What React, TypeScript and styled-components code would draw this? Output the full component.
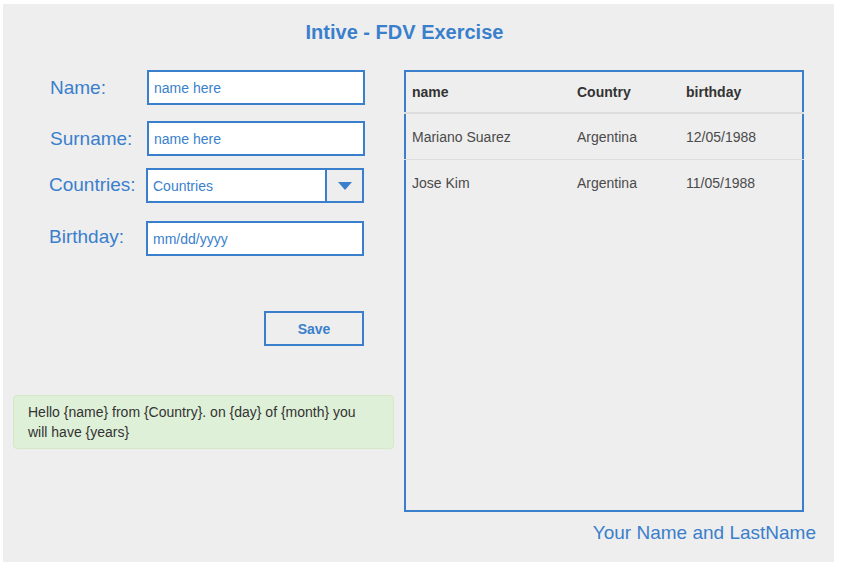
import React from "react";
import styled, { createGlobalStyle } from "styled-components";

const BLUE = "#3a7fcc";

const Global = createGlobalStyle`
  html, body { margin: 0; padding: 0; background: #ffffff; }
  body { font-family: "Liberation Sans", Arial, sans-serif; }
  * { box-sizing: border-box; }
`;

const Panel = styled.div`
  margin: 4px 0 0 3px;
  width: 831px;
  height: 558px;
  background: #eeeeee;
  padding: 16px 0 0 10px;
  display: flex;
  flex-direction: column;
`;

const Title = styled.h1`
  margin: 0 28px 0 -10px;
  font-size: 20px;
  line-height: 24px;
  font-weight: bold;
  color: ${BLUE};
  text-align: center;
`;

const Main = styled.div`
  margin-top: 26px;
  display: grid;
  grid-template-columns: 381px 400px;
  column-gap: 10px;
  height: 442px;
`;

const FormCol = styled.div`
  display: flex;
  flex-direction: column;
`;

const Row = styled.div<{ $top: number; $left: number }>`
  display: flex;
  align-items: flex-start;
  margin-top: ${(p) => p.$top}px;
  padding-left: ${(p) => p.$left}px;
`;

const Label = styled.label<{ $pt: number; $w: number }>`
  width: ${(p) => p.$w}px;
  padding-top: ${(p) => p.$pt}px;
  font-size: 19px;
  color: ${BLUE};
  line-height: 22px;
`;

const Input = styled.input`
  width: 218px;
  height: 35px;
  border: 2px solid ${BLUE};
  background: #ffffff;
  padding: 0 5px;
  font-family: "Liberation Sans", Arial, sans-serif;
  font-size: 14px;
  color: ${BLUE};
  outline: none;
  &::placeholder { color: ${BLUE}; opacity: 1; }
`;

const Select = styled.div`
  width: 218px;
  height: 35px;
  border: 2px solid ${BLUE};
  display: flex;
  background: #ffffff;
`;

const SelectText = styled.div`
  flex: 1;
  display: flex;
  align-items: center;
  padding-left: 5px;
  font-size: 14px;
  color: ${BLUE};
`;

const SelectArrow = styled.div`
  width: 37px;
  border-left: 2px solid ${BLUE};
  background: #eeeeee;
  display: flex;
  align-items: center;
  justify-content: center;
`;

const ButtonRow = styled.div`
  margin-top: 55px;
  padding-left: 251px;
`;

const SaveButton = styled.button`
  width: 100px;
  height: 35px;
  border: 2px solid ${BLUE};
  background: #eeeeee;
  color: ${BLUE};
  font-family: "Liberation Sans", Arial, sans-serif;
  font-weight: bold;
  font-size: 14px;
  cursor: pointer;
`;

const Message = styled.div`
  margin-top: 49px;
  background: #dff0d8;
  border: 1px solid #d6e9c6;
  border-radius: 4px;
  padding: 6px 22px 6px 14px;
  font-size: 14px;
  line-height: 20px;
  color: #333333;
`;

const Table = styled.div`
  border: 2px solid ${BLUE};
  display: flex;
  flex-direction: column;
`;

const TRow = styled.div<{ $head?: boolean }>`
  margin: 0 -2px;
  display: grid;
  grid-template-columns: 165px 109px 1fr;
  height: ${(p) => (p.$head ? 42 : 46)}px;
  border-bottom: ${(p) => (p.$head ? "2px solid #dddddd" : "1px solid #dddddd")};
  align-items: center;
  font-size: 14px;
  font-weight: ${(p) => (p.$head ? "bold" : "normal")};
  color: ${(p) => (p.$head ? "#333333" : "#4a4a4a")};
  &:last-child { border-bottom: none; }
`;

const Cell = styled.div`
  padding-left: 8px;
`;

const Footer = styled.div`
  margin-top: 10px;
  padding-right: 18px;
  text-align: right;
  font-size: 19px;
  line-height: 22px;
  color: ${BLUE};
`;

const rows = [
  { name: "Mariano Suarez", country: "Argentina", birthday: "12/05/1988" },
  { name: "Jose Kim", country: "Argentina", birthday: "11/05/1988" },
];

const message = "Hello {name} from {Country}. on {day} of {month} you will have {years}";

export default function App() {
  return (
    <>
      <Global />
      <Panel>
        <Title>Intive - FDV Exercise</Title>
        <Main>
          <FormCol>
            <Row $top={0} $left={37}>
              <Label $pt={7} $w={97}>Name:</Label>
              <Input placeholder="name here" />
            </Row>
            <Row $top={16} $left={37}>
              <Label $pt={7} $w={97}>Surname:</Label>
              <Input placeholder="name here" />
            </Row>
            <Row $top={12} $left={36}>
              <Label $pt={6} $w={97}>Countries:</Label>
              <Select>
                <SelectText>Countries</SelectText>
                <SelectArrow>
                  <svg width="14" height="8" viewBox="0 0 14 8">
                    <polygon points="0,0 14,0 7,8" fill={BLUE} />
                  </svg>
                </SelectArrow>
              </Select>
            </Row>
            <Row $top={18} $left={36}>
              <Label $pt={5} $w={97}>Birthday:</Label>
              <Input placeholder="mm/dd/yyyy" />
            </Row>
            <ButtonRow>
              <SaveButton>Save</SaveButton>
            </ButtonRow>
            <Message>{message}</Message>
          </FormCol>
          <Table>
            <TRow $head>
              <Cell>name</Cell>
              <Cell>Country</Cell>
              <Cell>birthday</Cell>
            </TRow>
            {rows.map((r) => (
              <TRow key={r.name}>
                <Cell>{r.name}</Cell>
                <Cell>{r.country}</Cell>
                <Cell>{r.birthday}</Cell>
              </TRow>
            ))}
          </Table>
        </Main>
        <Footer>Your Name and LastName</Footer>
      </Panel>
    </>
  );
}
